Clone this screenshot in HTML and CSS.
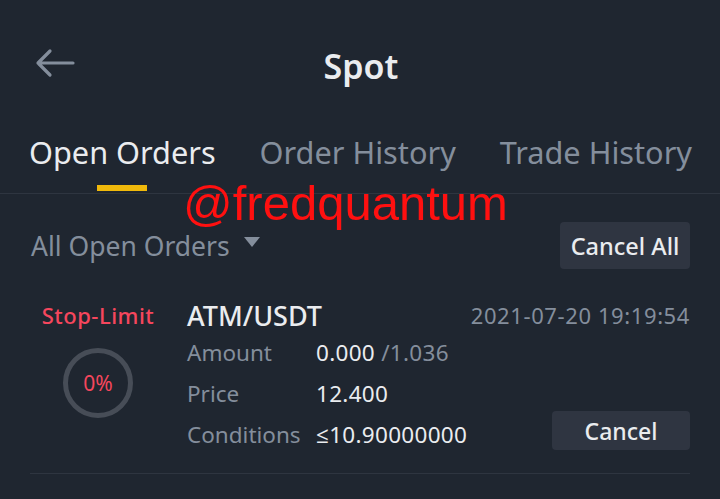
FILE: index.html
```html
<!DOCTYPE html>
<html>
<head>
<meta charset="utf-8">
<link rel="stylesheet" href="styles.css">
</head>
<body>
<div class="screen">
  <header class="topbar">
    <div class="back">
      <svg width="40" height="30" viewBox="0 0 40 30"><path d="M38 15H3M15 3L3 15L15 27" fill="none" stroke="#848e9c" stroke-width="3.2" stroke-linecap="round" stroke-linejoin="round"/></svg>
    </div>
    <h1 class="title">Spot</h1>
    <div></div>
  </header>
  <nav class="tabs">
    <div class="tab active"><span>Open Orders</span><i class="indicator"></i></div>
    <div class="tab"><span>Order History</span></div>
    <div class="tab"><span>Trade History</span></div>
  </nav>
  <div class="filter">
    <div class="select">All Open Orders <span class="caret"></span></div>
    <button class="btn btn-all">Cancel All</button>
  </div>
  <div class="order">
    <div class="order-left">
      <div class="type">Stop-Limit</div>
      <div class="ring">0%</div>
    </div>
    <div class="order-main">
      <div class="pair">ATM/USDT</div>
      <div class="row"><span class="label">Amount</span><span class="val">0.000 <span class="muted">/1.036</span></span></div>
      <div class="row"><span class="label">Price</span><span class="val">12.400</span></div>
      <div class="row"><span class="label">Conditions</span><span class="val">≤10.90000000</span></div>
    </div>
    <div class="order-right">
      <div class="time">2021-07-20 19:19:54</div>
      <button class="btn btn-cancel">Cancel</button>
    </div>
  </div>
  <div class="watermark">@fredquantum</div>
</div>
</body>
</html>
```
FILE: styles.css
```css
* { box-sizing: border-box; }
html, body { margin: 0; padding: 0; }
body {
  background: #1f2630;
  font-family: "Noto Sans", "Open Sans", sans-serif;
  color: #eaecef;
  width: 720px;
  height: 499px;
  overflow: hidden;
}
.screen { position: relative; width: 720px; height: 499px; }
.topbar {
  height: 132px;
  display: grid;
  grid-template-columns: 1fr auto 1fr;
  align-items: center;
}
.back { padding-left: 35px; display: flex; align-items: center; height: 30px; margin-top: -6px; }
.back svg { display: block; }
.title {
  margin: 0;
  font-size: 34px;
  font-weight: 600;
  color: #eaecef;
  line-height: 40px;
  margin-left: 2px;
}
.tabs {
  display: flex;
  justify-content: space-between;
  padding: 0 28px 0 29px;
  height: 62px;
  border-bottom: 1px solid #2e3540;
}
.tab {
  display: flex;
  flex-direction: column;
  align-items: center;
  font-size: 30.7px;
  line-height: 40px;
  color: #848e9c;
  letter-spacing: 0;
}
.tab.active { color: #eaecef; }
.indicator {
  display: block;
  width: 50px;
  height: 6px;
  background: #f0b90b;
  margin-top: 13px;
}
.filter {
  display: flex;
  justify-content: space-between;
  align-items: center;
  padding: 28px 30px 0 31px;
}
.select {
  font-size: 26.5px;
  color: #848e9c;
  display: flex;
  align-items: center;
  gap: 14px;
  letter-spacing: 0;
}
.caret {
  width: 0; height: 0;
  border-left: 8px solid transparent;
  border-right: 8px solid transparent;
  border-top: 10px solid #848e9c;
  margin-top: -8px;
}
.btn {
  background: #2f3541;
  border: none;
  border-radius: 4px;
  color: #eaecef;
  font-family: inherit;
  padding: 0;
}
.btn-all { width: 130px; height: 47px; font-size: 23.5px; font-weight: 500; }
.order {
  margin: 0 30px;
  padding-top: 32px;
  padding-bottom: 18px;
  display: flex;
  border-bottom: 1px solid #2e3540;
}
.order-left {
  width: 136px;
  display: flex;
  flex-direction: column;
  align-items: center;
  gap: 19px;
}
.type { color: #f6465d; font-size: 22px; font-weight: 500; line-height: 28px; letter-spacing: 0.5px; }
.ring {
  width: 70px; height: 70px;
  border-radius: 50%;
  border: 5px solid #474d57;
  display: flex; align-items: center; justify-content: center;
  color: #f6465d;
  font-size: 21px;
}
.order-main { flex: 1; padding-left: 21px; }
.pair { font-size: 27px; font-weight: 500; line-height: 30px; margin-bottom: 1px; }
.row { display: flex; height: 41px; align-items: center; font-size: 22.5px; }
.label { width: 129px; color: #848e9c; }
.val { color: #eaecef; letter-spacing: 0.3px; }
.muted { color: #848e9c; }
.order-right {
  display: flex;
  flex-direction: column;
  align-items: flex-end;
  justify-content: space-between;
  padding-bottom: 5px;
}
.time { color: #848e9c; font-size: 22px; line-height: 28px; letter-spacing: 0.6px; }
.btn-cancel { width: 138px; height: 39px; font-size: 23px; font-weight: 500; }
.watermark {
  position: absolute;
  left: 183px;
  top: 175px;
  font-family: "Liberation Sans", Arial, sans-serif;
  font-size: 49px;
  color: #ff1010;
  line-height: 56px;
}
```
